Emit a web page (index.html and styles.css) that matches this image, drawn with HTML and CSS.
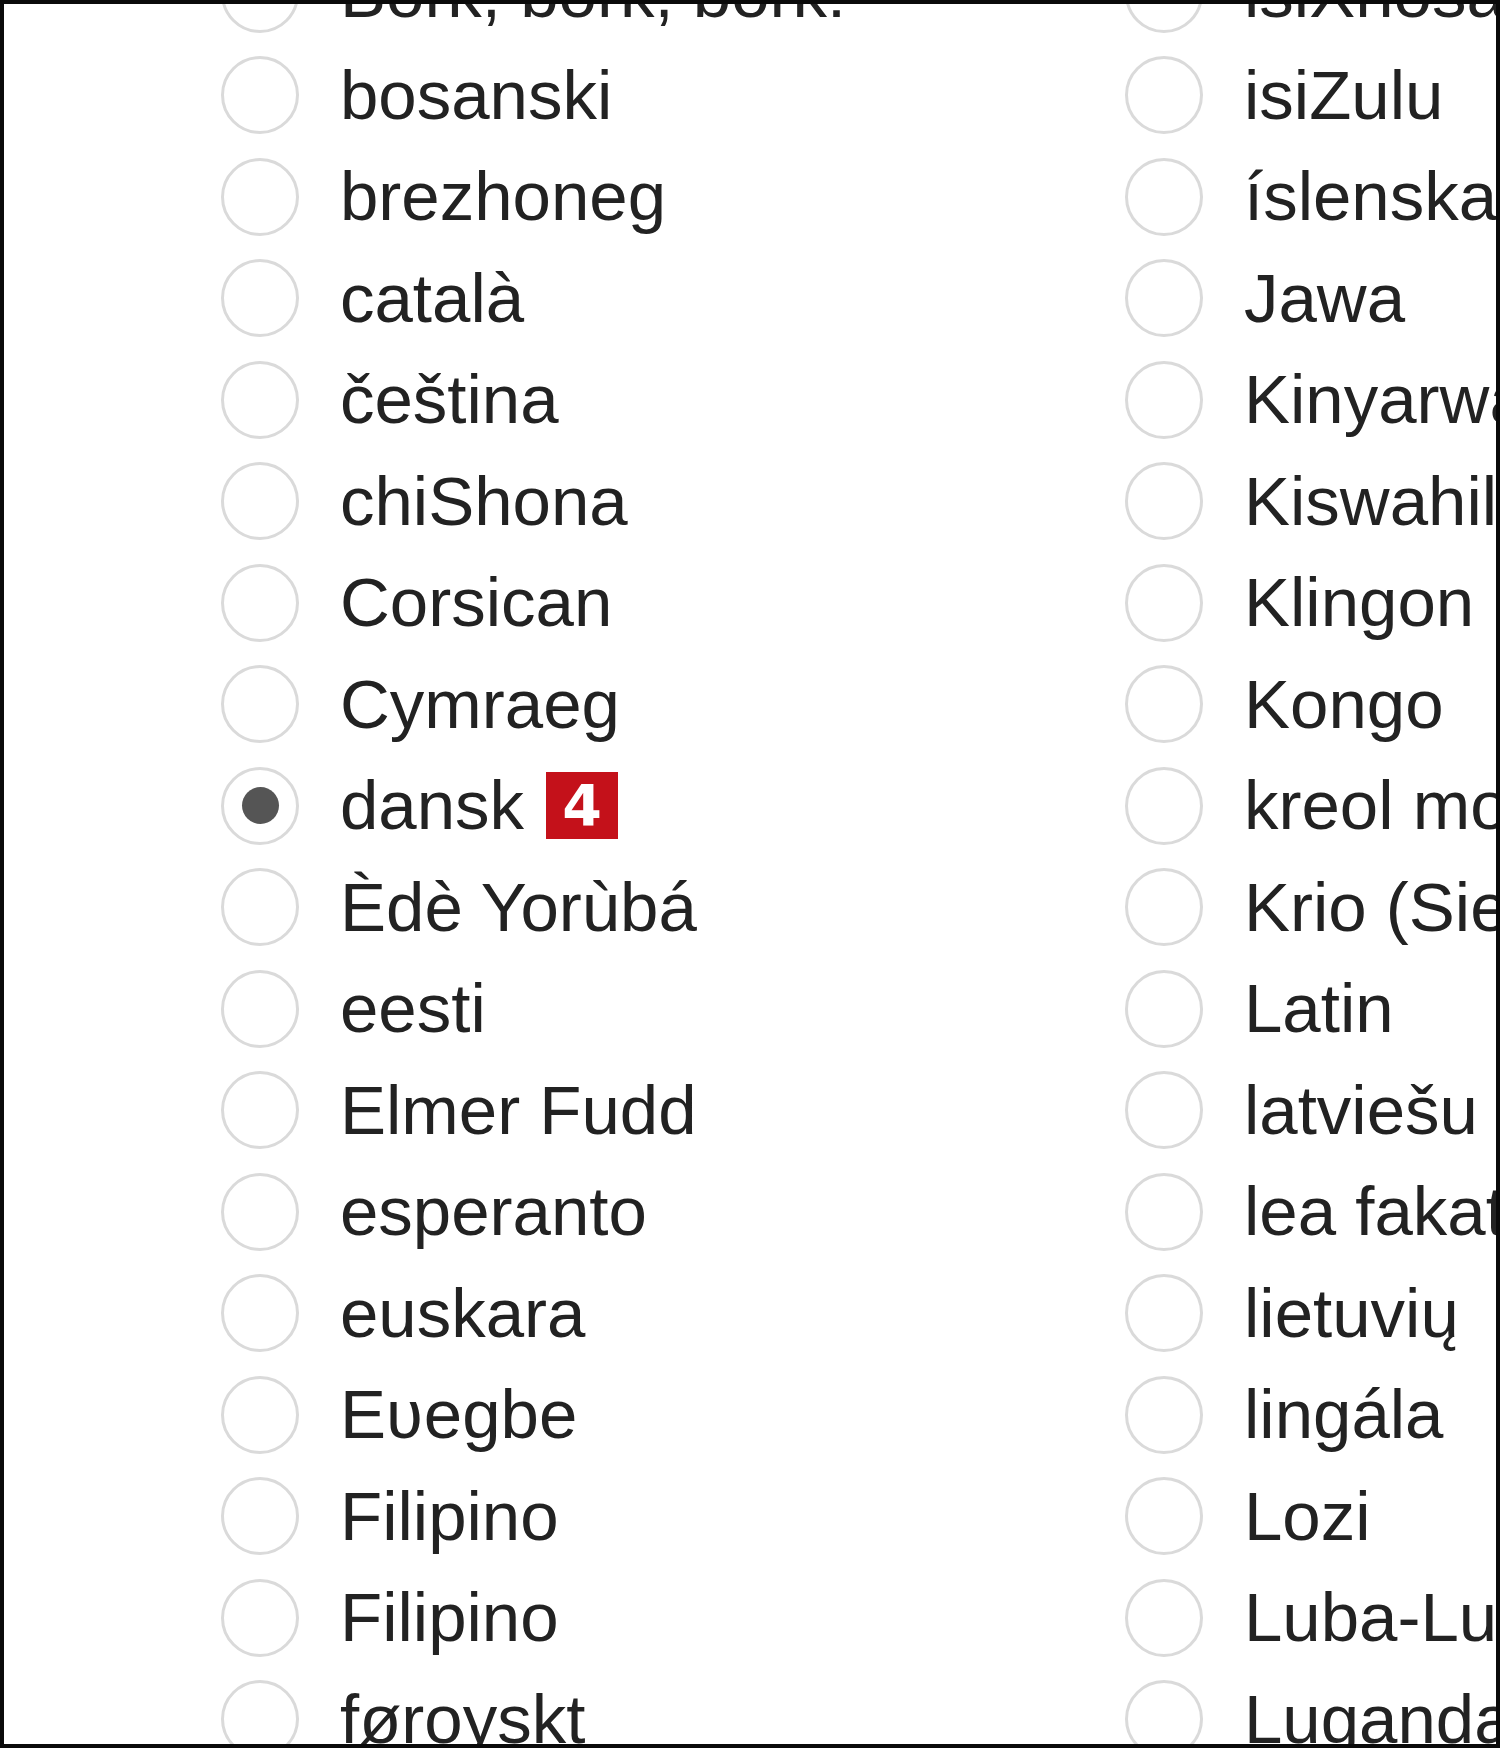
FILE: index.html
```html
<!DOCTYPE html>
<html lang="en">
<head>
  <meta charset="UTF-8">
  <title>Language</title>
  <meta name="viewport" content="width=device-width, initial-scale=1.0">
  <link rel="stylesheet" href="styles.css">
</head>
<body>

  <div class="frame">
    <form class="langs">
      <label class="lang"><input type="radio" name="lang"><span>Bork, bork, bork!</span></label>
      <label class="lang"><input type="radio" name="lang"><span>bosanski</span></label>
      <label class="lang"><input type="radio" name="lang"><span>brezhoneg</span></label>
      <label class="lang"><input type="radio" name="lang"><span>català</span></label>
      <label class="lang"><input type="radio" name="lang"><span>čeština</span></label>
      <label class="lang"><input type="radio" name="lang"><span>chiShona</span></label>
      <label class="lang"><input type="radio" name="lang"><span>Corsican</span></label>
      <label class="lang"><input type="radio" name="lang"><span>Cymraeg</span></label>
      <label class="lang"><input type="radio" name="lang" checked><span>dansk</span><b class="badge">4</b></label>
      <label class="lang"><input type="radio" name="lang"><span>Èdè Yorùbá</span></label>
      <label class="lang"><input type="radio" name="lang"><span>eesti</span></label>
      <label class="lang"><input type="radio" name="lang"><span>Elmer Fudd</span></label>
      <label class="lang"><input type="radio" name="lang"><span>esperanto</span></label>
      <label class="lang"><input type="radio" name="lang"><span>euskara</span></label>
      <label class="lang"><input type="radio" name="lang"><span>Eʋegbe</span></label>
      <label class="lang"><input type="radio" name="lang"><span>Filipino</span></label>
      <label class="lang"><input type="radio" name="lang"><span>Filipino</span></label>
      <label class="lang"><input type="radio" name="lang"><span>føroyskt</span></label>

      <label class="lang"><input type="radio" name="lang"><span>isiXhosa</span></label>
      <label class="lang"><input type="radio" name="lang"><span>isiZulu</span></label>
      <label class="lang"><input type="radio" name="lang"><span>íslenska</span></label>
      <label class="lang"><input type="radio" name="lang"><span>Jawa</span></label>
      <label class="lang"><input type="radio" name="lang"><span>Kinyarwanda</span></label>
      <label class="lang"><input type="radio" name="lang"><span>Kiswahili</span></label>
      <label class="lang"><input type="radio" name="lang"><span>Klingon</span></label>
      <label class="lang"><input type="radio" name="lang"><span>Kongo</span></label>
      <label class="lang"><input type="radio" name="lang"><span>kreol morisien</span></label>
      <label class="lang"><input type="radio" name="lang"><span>Krio (Sierra Leone)</span></label>
      <label class="lang"><input type="radio" name="lang"><span>Latin</span></label>
      <label class="lang"><input type="radio" name="lang"><span>latviešu</span></label>
      <label class="lang"><input type="radio" name="lang"><span>lea fakatonga</span></label>
      <label class="lang"><input type="radio" name="lang"><span>lietuvių</span></label>
      <label class="lang"><input type="radio" name="lang"><span>lingála</span></label>
      <label class="lang"><input type="radio" name="lang"><span>Lozi</span></label>
      <label class="lang"><input type="radio" name="lang"><span>Luba-Lulua</span></label>
      <label class="lang"><input type="radio" name="lang"><span>Luganda</span></label>
    </form>
  </div>

</body>
</html>
```

FILE: styles.css
```css
* {
  margin: 0;
  padding: 0;
  box-sizing: border-box;
}

body {
  background: #000;
  font-family: 'Liberation Sans', Arial, sans-serif;
}

.frame {
  height: 1748px;
  border: 4px solid #0a0a0a;
  background: #fff;
  overflow: hidden;
}

.langs {
  display: grid;
  grid-template-columns: 904px 904px;
  grid-template-rows: repeat(18, 101.5px);
  grid-auto-flow: column;
  margin-top: -61px;
  padding-left: 217px;
}

.lang {
  display: flex;
  align-items: center;
  white-space: nowrap;
  font-size: 69px;
  color: #222;
}

.lang input {
  appearance: none;
  -webkit-appearance: none;
  flex: 0 0 78px;
  width: 78px;
  height: 78px;
  margin-right: 41px;
  border: 3px solid #dadada;
  border-radius: 50%;
  background: #fff;
  display: flex;
  align-items: center;
  justify-content: center;
}

.lang input:checked::after {
  content: '';
  width: 37px;
  height: 37px;
  border-radius: 50%;
  background: #555;
}

.badge {
  display: flex;
  align-items: center;
  justify-content: center;
  width: 72px;
  height: 67px;
  margin-left: 22px;
  background: #c4111a;
  color: #fff;
  font-family: 'DejaVu Sans', Verdana, sans-serif;
  font-weight: bold;
  font-size: 57px;
}
```
